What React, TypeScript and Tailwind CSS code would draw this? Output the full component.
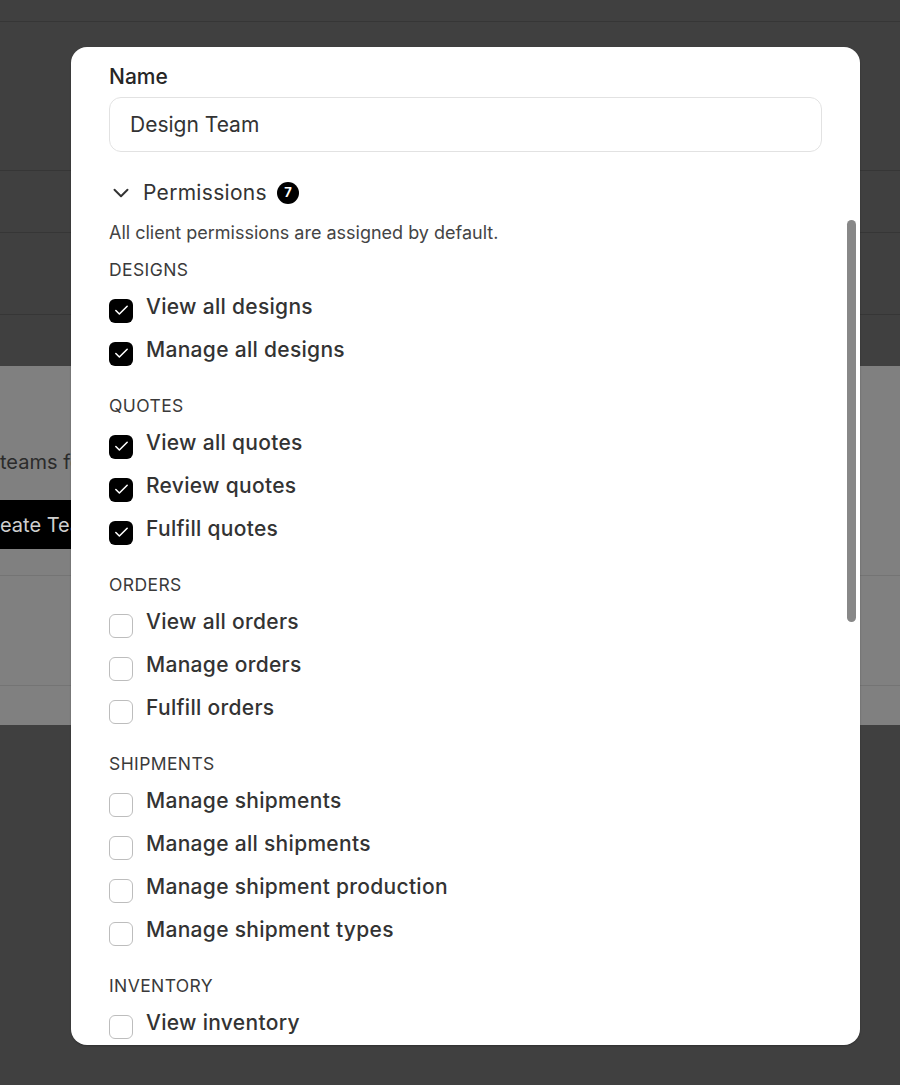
import { ChevronDown, Check } from 'lucide-react';

type Perm = { label: string; on: boolean };

const sections: { title: string; items: Perm[] }[] = [
  {
    title: 'DESIGNS',
    items: [
      { label: 'View all designs', on: true },
      { label: 'Manage all designs', on: true },
    ],
  },
  {
    title: 'QUOTES',
    items: [
      { label: 'View all quotes', on: true },
      { label: 'Review quotes', on: true },
      { label: 'Fulfill quotes', on: true },
    ],
  },
  {
    title: 'ORDERS',
    items: [
      { label: 'View all orders', on: false },
      { label: 'Manage orders', on: false },
      { label: 'Fulfill orders', on: false },
    ],
  },
  {
    title: 'SHIPMENTS',
    items: [
      { label: 'Manage shipments', on: false },
      { label: 'Manage all shipments', on: false },
      { label: 'Manage shipment production', on: false },
      { label: 'Manage shipment types', on: false },
    ],
  },
  {
    title: 'INVENTORY',
    items: [{ label: 'View inventory', on: false }],
  },
];

function Checkbox({ on }: { on: boolean }) {
  if (on)
    return (
      <span className="mt-2 flex h-6 w-6 flex-shrink-0 items-center justify-center rounded-md bg-black">
        <Check className="text-white" size={17} strokeWidth={2.2} />
      </span>
    );
  return <span className="mt-2 h-6 w-6 flex-shrink-0 rounded-md border-[1.5px] border-[#bdbdbd] bg-white" />;
}

function Backdrop() {
  return (
    <div className="flex h-full flex-col bg-[#404040]">
      <div className="h-[22px] border-b border-[#363636]" />
      <div className="h-[149px] border-b border-[#363636]" />
      <div className="h-[62px] border-b border-[#363636]" />
      <div className="h-[82px] border-b border-[#363636]" />
      <div className="h-[51px]" />

      {/* grey panel behind the dialog */}
      <div className="flex h-[359px] flex-col bg-[#808080]">
        <p className="mt-[82px] text-[20px] leading-[28px] text-[#2b2b2b]">teams for your clients</p>
        <div className="mt-6 flex h-[49px] w-[200px] items-center bg-black">
          <span className="whitespace-nowrap text-[20px] text-[#cfcfcf]">eate Team</span>
        </div>
        <div className="mt-[26px] h-[111px] border-y border-[#747474]" />
      </div>
    </div>
  );
}

export default function App() {
  return (
    <div
      className="relative h-[1085px] w-full overflow-hidden"
      style={{ fontFamily: 'Inter, "Open Sans", sans-serif' }}
    >
      <Backdrop />

      {/* Dialog */}
      <div className="absolute left-[71px] top-[47px] h-[998px] w-[789px] overflow-hidden rounded-2xl bg-white shadow-[0_1px_2px_rgba(0,0,0,0.25)]">
        <div className="px-[38px] pt-4">
          <p className="text-[21px] font-medium leading-[28px] text-[#262626]">Name</p>
          <div className="mt-1.5 flex h-[55px] items-center rounded-xl border border-[#e2e2e2] px-5">
            <span className="text-[21px] text-[#333]">Design Team</span>
          </div>

          <div className="mt-[27px] flex h-7 items-center">
            <ChevronDown size={26} strokeWidth={1.8} className="-ml-[1px] text-[#333]" />
            <span className="ml-[9px] text-[21px] tracking-[0.3px] text-[#333]">Permissions</span>
            <span className="ml-[10px] flex h-[22px] w-[22px] items-center justify-center rounded-full bg-black text-[13px] font-bold text-white">
              7
            </span>
          </div>

          <p className="mt-[14px] text-[18px] leading-6 text-[#444]">
            All client permissions are assigned by default.
          </p>

          <div className="mt-[13px] flex flex-col gap-[23px]">
            {sections.map(s => (
              <div key={s.title}>
                <p className="text-[17.5px] leading-6 tracking-[0.4px] text-[#3a3a3a]">{s.title}</p>
                <div className="mt-[3px]">
                  {s.items.map(it => (
                    <div key={it.label} className="flex h-[43px] items-center gap-[13px]">
                      <Checkbox on={it.on} />
                      <span className="text-[21px] font-medium tracking-[0.3px] text-[#333]">{it.label}</span>
                    </div>
                  ))}
                </div>
              </div>
            ))}
          </div>
        </div>

        {/* scrollbar thumb */}
        <div className="absolute left-[776px] top-[173px] h-[402px] w-[9px] rounded-full bg-[#888]" />
      </div>
    </div>
  );
}
